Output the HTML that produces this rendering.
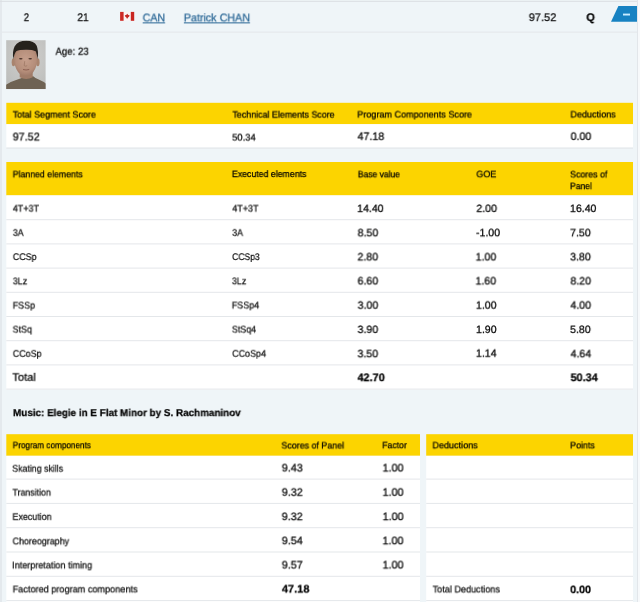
<!DOCTYPE html>
<html><head><meta charset="utf-8">
<style>
html,body{margin:0;padding:0;}
body{width:640px;height:602px;overflow:hidden;background:#eff5f8;position:relative;font-family:"Liberation Sans",sans-serif;}
.t{position:absolute;left:0;top:0;white-space:nowrap;line-height:12px;transform-origin:0 0;text-rendering:geometricPrecision;-webkit-text-stroke:0.25px currentColor;will-change:transform;}
svg{position:absolute;left:0;top:0;}
</style></head><body>
<svg width="640" height="602" viewBox="0 0 640 602" shape-rendering="geometricPrecision">
<defs>
<radialGradient id="pbg" cx="0.55" cy="0.35" r="0.75"><stop offset="0" stop-color="#d0d0ce"/><stop offset="1" stop-color="#bcbdbb"/></radialGradient>
<radialGradient id="skin" cx="0.5" cy="0.4" r="0.65"><stop offset="0" stop-color="#c69f8c"/><stop offset="0.65" stop-color="#b58e7a"/><stop offset="1" stop-color="#977363"/></radialGradient><clipPath id="pclip"><rect width="39.4" height="48.9"/></clipPath><filter id="pblur" x="-10%" y="-10%" width="120%" height="120%"><feGaussianBlur stdDeviation="0.45"/></filter>
</defs>
<rect x="0" y="0" width="640" height="602" fill="#eff5f8"/>
<rect x="0" y="0" width="2" height="602" fill="#e4e9ed"/>
<rect x="0" y="0.8" width="637.5" height="1" fill="#dadee2"/>
<rect x="637" y="0" width="1" height="602" fill="#e2e6ea"/>
<rect x="638" y="0" width="2" height="602" fill="#f7f9fb"/>
<rect x="2" y="31.6" width="635" height="1" fill="#e3e7ea"/>
<!-- blue tab -->
<path d="M618.4 6 L637 6 L637 21.8 L611 21.8 Z" fill="#1782c2"/>
<rect x="623" y="13.6" width="7" height="1.9" fill="#c9ecff"/>
<!-- flag -->
<rect x="120.1" y="11.9" width="14.1" height="8.9" fill="#fbf3f3"/>
<rect x="120.1" y="11.9" width="3.5" height="8.9" fill="#cc2a25"/>
<rect x="130.8" y="11.9" width="3.4" height="8.9" fill="#c92520"/>
<path d="M127.2 13.8 L128.2 15 L129.6 15.3 L129.2 16.6 L128 17.6 L127.6 18.6 L126.8 18.6 L126.4 17.6 L125.2 16.6 L124.8 15.3 L126.2 15 Z" fill="#c42823"/>
<!-- photo -->
<g transform="translate(6.2,40.2)">
<rect width="39.4" height="48.9" fill="url(#pbg)"/>
<g clip-path="url(#pclip)"><g filter="url(#pblur)">
<path d="M-1 50 L-1 45 Q5 41 12 39 Q16 38 18 36 L27 36 Q29 38 32 39 Q37 41 40.5 44 L40.5 50 Z" fill="#6e6252"/>
<path d="M13.5 28 L26.5 28 L26.5 37 Q20 40.5 13.5 37 Z" fill="#a07c68"/>
<ellipse cx="7.3" cy="22" rx="1.8" ry="4" fill="#a9846e"/>
<ellipse cx="31.6" cy="22" rx="1.8" ry="4" fill="#a9846e"/>
<path d="M7.8 17 Q7.5 12 10 9 L29 9 Q31.5 12 31.2 17 Q31 27 27 32 Q23.5 36 19.5 36 Q15.5 36 12 32 Q8 27 7.8 17 Z" fill="url(#skin)"/>
<path d="M7 19 Q6 11 8.5 6 Q12 0.6 20 0.6 Q28 0.6 30.5 5.5 Q32.5 10.5 31.4 19 Q30.5 13 29.5 11 Q26 9.4 19.5 9.6 Q13 9.6 10 11 Q8.3 13 7 19 Z" fill="#25201d"/>
<ellipse cx="14.6" cy="18.6" rx="1.8" ry="0.8" fill="#4a342c"/>
<ellipse cx="24" cy="18.6" rx="1.8" ry="0.8" fill="#4a342c"/>
<path d="M18.5 21 L18 25.5 Q19.5 26.5 21 25.5" stroke="#9a7460" stroke-width="0.7" fill="none"/>
<path d="M16.8 29.3 Q19.8 30.3 23 29.3" stroke="#8c5f52" stroke-width="1" fill="none"/>
</g></g>
</g>
<!-- table 1 -->
<rect x="6.3" y="102.8" width="626.7" height="21.4" fill="#fcd400"/>
<rect x="6.3" y="124.2" width="626.7" height="23.4" fill="#ffffff"/>
<rect x="6.3" y="147.6" width="626.7" height="1" fill="#e2e5e8"/>
<!-- table 2 -->
<rect x="6.3" y="162" width="626.7" height="33.4" fill="#fcd400"/>
<rect x="6.3" y="195.4" width="626.7" height="194.2" fill="#ffffff"/>
<g fill="#e4e7ea">
<rect x="6.3" y="219.2" width="626.7" height="1"/>
<rect x="6.3" y="243.4" width="626.7" height="1"/>
<rect x="6.3" y="267.6" width="626.7" height="1"/>
<rect x="6.3" y="291.8" width="626.7" height="1"/>
<rect x="6.3" y="316.0" width="626.7" height="1"/>
<rect x="6.3" y="340.2" width="626.7" height="1"/>
<rect x="6.3" y="364.4" width="626.7" height="1"/>
<rect x="6.3" y="388.6" width="626.7" height="1"/>
</g>
<!-- table 3 -->
<rect x="6.3" y="434.2" width="413.7" height="21.6" fill="#fcd400"/>
<rect x="426.2" y="434.2" width="206.8" height="21.6" fill="#fcd400"/>
<rect x="6.3" y="455.8" width="413.7" height="146.2" fill="#ffffff"/>
<rect x="426.2" y="455.8" width="206.8" height="146.2" fill="#ffffff"/>
<g fill="#e4e7ea">
<rect x="6.3" y="478.6" width="413.7" height="1"/><rect x="426.2" y="478.6" width="206.8" height="1"/>
<rect x="6.3" y="502.9" width="413.7" height="1"/><rect x="426.2" y="502.9" width="206.8" height="1"/>
<rect x="6.3" y="527.2" width="413.7" height="1"/><rect x="426.2" y="527.2" width="206.8" height="1"/>
<rect x="6.3" y="551.5" width="413.7" height="1"/><rect x="426.2" y="551.5" width="206.8" height="1"/>
<rect x="6.3" y="575.8" width="413.7" height="1"/><rect x="426.2" y="575.8" width="206.8" height="1"/>
<rect x="6.3" y="600.1" width="413.7" height="1"/><rect x="426.2" y="600.1" width="206.8" height="1"/>
</g>
</svg>

<div class="t" id="t0" style="font-size:11px;color:#0a0a0a;transform:translate(23.74px,11.95px) scale(0.8793,0.9995);">2</div>
<div class="t" id="t1" style="font-size:11px;color:#0a0a0a;transform:translate(77.38px,11.95px) scale(0.9285,0.9995);">21</div>
<div class="t" id="t2" style="font-size:11px;color:#2a6796;transform:translate(142.66px,12.33px) scale(0.9649,0.9995);text-decoration:underline;">CAN</div>
<div class="t" id="t3" style="font-size:11px;color:#2a6796;transform:translate(183.82px,12.33px) scale(0.9752,0.9995);text-decoration:underline;">Patrick CHAN</div>
<div class="t" id="t4" style="font-size:11px;color:#0a0a0a;transform:translate(528.75px,11.95px) scale(0.9997,0.9995);">97.52</div>
<div class="t" id="t5" style="font-size:11px;color:#000;transform:translate(586.28px,11.95px) scale(1.0029,0.9995);font-weight:bold;">Q</div>
<div class="t" id="t6" style="font-size:10.3px;color:#0a0a0a;transform:translate(55.51px,46.71px) scale(0.9349,0.9995);">Age: 23</div>
<div class="t" id="t7" style="font-size:9.2px;color:#000;transform:translate(12.73px,108.55px) scale(0.9742,0.9995);">Total Segment Score</div>
<div class="t" id="t8" style="font-size:9.2px;color:#000;transform:translate(232.46px,108.59px) scale(0.9662,0.9995);">Technical Elements Score</div>
<div class="t" id="t9" style="font-size:9.2px;color:#000;transform:translate(357.23px,108.50px) scale(0.9855,0.9995);">Program Components Score</div>
<div class="t" id="t10" style="font-size:9.2px;color:#000;transform:translate(570.43px,108.43px) scale(0.9860,0.9995);">Deductions</div>
<div class="t" id="t11" style="font-size:11px;color:#000;transform:translate(12.67px,131.40px) scale(0.9818,0.9995);">97.52</div>
<div class="t" id="t12" style="font-size:9.6px;color:#000;transform:translate(232.20px,132.54px) scale(0.9753,0.9995);">50.34</div>
<div class="t" id="t13" style="font-size:10.8px;color:#000;transform:translate(357.52px,130.83px) scale(0.9905,0.9995);">47.18</div>
<div class="t" id="t14" style="font-size:10.8px;color:#000;transform:translate(570.60px,130.82px) scale(0.9848,0.9995);">0.00</div>
<div class="t" id="t15" style="font-size:9.2px;color:#000;transform:translate(12.71px,168.30px) scale(0.9505,0.9995);">Planned elements</div>
<div class="t" id="t16" style="font-size:9.2px;color:#000;transform:translate(231.91px,167.99px) scale(0.9538,0.9995);">Executed elements</div>
<div class="t" id="t17" style="font-size:9.2px;color:#000;transform:translate(357.90px,168.29px) scale(0.9250,0.9995);">Base value</div>
<div class="t" id="t18" style="font-size:9.2px;color:#000;transform:translate(476.30px,168.24px) scale(0.9812,0.9995);">GOE</div>
<div class="t" id="t19" style="font-size:9.2px;color:#000;transform:translate(570.04px,168.40px) scale(0.9601,0.9995);">Scores of</div>
<div class="t" id="t20" style="font-size:9.2px;color:#000;transform:translate(570.01px,180.09px) scale(0.9312,0.9995);">Panel</div>
<div class="t" id="t21" style="font-size:9.6px;color:#111;transform:translate(12.83px,203.51px) scale(0.9350,0.9995);">4T+3T</div>
<div class="t" id="t22" style="font-size:9.6px;color:#111;transform:translate(232.38px,203.51px) scale(0.9300,0.9995);">4T+3T</div>
<div class="t" id="t23" style="font-size:10.6px;color:#000;transform:translate(357.14px,202.94px) scale(1.0000,0.9995);">14.40</div>
<div class="t" id="t24" style="font-size:10.6px;color:#000;transform:translate(476.34px,202.94px) scale(1.0000,0.9995);">2.00</div>
<div class="t" id="t25" style="font-size:10.6px;color:#000;transform:translate(569.90px,202.94px) scale(1.0000,0.9995);">16.40</div>
<div class="t" id="t26" style="font-size:9.6px;color:#111;transform:translate(12.81px,227.76px) scale(0.9300,0.9995);">3A</div>
<div class="t" id="t27" style="font-size:9.6px;color:#111;transform:translate(232.17px,227.77px) scale(0.9300,0.9995);">3A</div>
<div class="t" id="t28" style="font-size:10.6px;color:#000;transform:translate(357.58px,227.27px) scale(1.0000,0.9995);">8.50</div>
<div class="t" id="t29" style="font-size:10.6px;color:#000;transform:translate(475.97px,227.25px) scale(1.0000,0.9995);">-1.00</div>
<div class="t" id="t30" style="font-size:10.6px;color:#000;transform:translate(570.10px,227.28px) scale(1.0000,0.9995);">7.50</div>
<div class="t" id="t31" style="font-size:9.6px;color:#111;transform:translate(12.82px,251.95px) scale(0.9300,0.9995);">CCSp</div>
<div class="t" id="t32" style="font-size:9.6px;color:#111;transform:translate(232.19px,251.96px) scale(0.8912,0.9995);">CCSp3</div>
<div class="t" id="t33" style="font-size:10.6px;color:#000;transform:translate(357.49px,251.37px) scale(1.0000,0.9995);">2.80</div>
<div class="t" id="t34" style="font-size:10.6px;color:#000;transform:translate(475.58px,251.40px) scale(1.0000,0.9995);">1.00</div>
<div class="t" id="t35" style="font-size:10.6px;color:#000;transform:translate(570.15px,251.35px) scale(1.0000,0.9995);">3.80</div>
<div class="t" id="t36" style="font-size:9.6px;color:#111;transform:translate(12.80px,276.28px) scale(0.9300,0.9995);">3Lz</div>
<div class="t" id="t37" style="font-size:9.6px;color:#111;transform:translate(231.89px,276.23px) scale(0.9300,0.9995);">3Lz</div>
<div class="t" id="t38" style="font-size:10.6px;color:#000;transform:translate(357.56px,275.43px) scale(1.0000,0.9995);">6.60</div>
<div class="t" id="t39" style="font-size:10.6px;color:#000;transform:translate(475.45px,275.43px) scale(1.0000,0.9995);">1.60</div>
<div class="t" id="t40" style="font-size:10.6px;color:#000;transform:translate(570.40px,275.44px) scale(1.0000,0.9995);">8.20</div>
<div class="t" id="t41" style="font-size:9.6px;color:#111;transform:translate(12.74px,300.52px) scale(0.9300,0.9995);">FSSp</div>
<div class="t" id="t42" style="font-size:9.6px;color:#111;transform:translate(231.82px,300.38px) scale(0.9300,0.9995);">FSSp4</div>
<div class="t" id="t43" style="font-size:10.6px;color:#000;transform:translate(357.57px,299.69px) scale(1.0000,0.9995);">3.00</div>
<div class="t" id="t44" style="font-size:10.6px;color:#000;transform:translate(475.92px,299.69px) scale(1.0000,0.9995);">1.00</div>
<div class="t" id="t45" style="font-size:10.6px;color:#000;transform:translate(570.39px,299.68px) scale(1.0000,0.9995);">4.00</div>
<div class="t" id="t46" style="font-size:9.6px;color:#111;transform:translate(12.60px,324.54px) scale(0.9300,0.9995);">StSq</div>
<div class="t" id="t47" style="font-size:9.6px;color:#111;transform:translate(231.85px,324.52px) scale(0.9300,0.9995);">StSq4</div>
<div class="t" id="t48" style="font-size:10.6px;color:#000;transform:translate(357.56px,323.94px) scale(1.0000,0.9995);">3.90</div>
<div class="t" id="t49" style="font-size:10.6px;color:#000;transform:translate(475.94px,323.94px) scale(1.0000,0.9995);">1.90</div>
<div class="t" id="t50" style="font-size:10.6px;color:#000;transform:translate(570.10px,323.94px) scale(1.0000,0.9995);">5.80</div>
<div class="t" id="t51" style="font-size:9.6px;color:#111;transform:translate(12.80px,348.76px) scale(0.9300,0.9995);">CCoSp</div>
<div class="t" id="t52" style="font-size:9.6px;color:#111;transform:translate(232.21px,348.75px) scale(0.9300,0.9995);">CCoSp4</div>
<div class="t" id="t53" style="font-size:10.6px;color:#000;transform:translate(357.50px,348.25px) scale(1.0000,0.9995);">3.50</div>
<div class="t" id="t54" style="font-size:10.6px;color:#000;transform:translate(475.90px,347.73px) scale(1.0000,0.9995);">1.14</div>
<div class="t" id="t55" style="font-size:10.6px;color:#000;transform:translate(570.51px,348.26px) scale(1.0000,0.9995);">4.64</div>
<div class="t" id="t56" style="font-size:11px;color:#000;transform:translate(12.39px,371.77px) scale(1.0093,0.9995);">Total</div>
<div class="t" id="t57" style="font-size:11px;color:#000;transform:translate(357.50px,372.08px) scale(0.9886,0.9995);font-weight:bold;">42.70</div>
<div class="t" id="t58" style="font-size:11px;color:#000;transform:translate(570.62px,372.09px) scale(0.9828,0.9995);font-weight:bold;">50.34</div>
<div class="t" id="t59" style="font-size:10px;color:#000;transform:translate(13.03px,408.05px) scale(0.9875,0.9995);font-weight:bold;">Music: Elegie in E Flat Minor by S. Rachmaninov</div>
<div class="t" id="t60" style="font-size:9.2px;color:#000;transform:translate(12.72px,439.22px) scale(0.8900,0.9995);">Program components</div>
<div class="t" id="t61" style="font-size:9.2px;color:#000;transform:translate(281.36px,439.45px) scale(0.9676,0.9995);">Scores of Panel</div>
<div class="t" id="t62" style="font-size:9.2px;color:#000;transform:translate(382.25px,439.23px) scale(0.9462,0.9995);">Factor</div>
<div class="t" id="t63" style="font-size:9.2px;color:#000;transform:translate(432.45px,439.30px) scale(0.9847,0.9995);">Deductions</div>
<div class="t" id="t64" style="font-size:9.2px;color:#000;transform:translate(570.12px,439.35px) scale(0.9621,0.9995);">Points</div>
<div class="t" id="t65" style="font-size:9.6px;color:#111;transform:translate(12.20px,463.64px) scale(0.9175,0.9995);">Skating skills</div>
<div class="t" id="t66" style="font-size:10.8px;color:#000;transform:translate(281.70px,462.40px) scale(1.0000,0.9995);">9.43</div>
<div class="t" id="t67" style="font-size:10.8px;color:#000;transform:translate(382.55px,462.41px) scale(1.0000,0.9995);">1.00</div>
<div class="t" id="t68" style="font-size:9.6px;color:#111;transform:translate(12.48px,487.51px) scale(0.9191,0.9995);">Transition</div>
<div class="t" id="t69" style="font-size:10.8px;color:#000;transform:translate(281.69px,486.75px) scale(1.0000,0.9995);">9.32</div>
<div class="t" id="t70" style="font-size:10.8px;color:#000;transform:translate(382.55px,486.74px) scale(1.0000,0.9995);">1.00</div>
<div class="t" id="t71" style="font-size:9.6px;color:#111;transform:translate(12.42px,511.84px) scale(0.9300,0.9995);">Execution</div>
<div class="t" id="t72" style="font-size:10.8px;color:#000;transform:translate(281.68px,511.09px) scale(1.0000,0.9995);">9.32</div>
<div class="t" id="t73" style="font-size:10.8px;color:#000;transform:translate(382.57px,511.09px) scale(1.0000,0.9995);">1.00</div>
<div class="t" id="t74" style="font-size:9.6px;color:#111;transform:translate(12.54px,536.32px) scale(0.9300,0.9995);">Choreography</div>
<div class="t" id="t75" style="font-size:10.8px;color:#000;transform:translate(281.70px,535.24px) scale(1.0000,0.9995);">9.54</div>
<div class="t" id="t76" style="font-size:10.8px;color:#000;transform:translate(382.46px,535.21px) scale(1.0000,0.9995);">1.00</div>
<div class="t" id="t77" style="font-size:9.6px;color:#111;transform:translate(12.13px,560.32px) scale(0.9433,0.9995);">Interpretation timing</div>
<div class="t" id="t78" style="font-size:10.8px;color:#000;transform:translate(281.69px,559.46px) scale(1.0000,0.9995);">9.57</div>
<div class="t" id="t79" style="font-size:10.8px;color:#000;transform:translate(382.55px,559.41px) scale(1.0000,0.9995);">1.00</div>
<div class="t" id="t80" style="font-size:9.6px;color:#111;transform:translate(12.68px,584.36px) scale(0.9520,0.9995);">Factored program components</div>
<div class="t" id="t81" style="font-size:10.8px;color:#000;transform:translate(281.86px,583.50px) scale(1.0170,0.9995);font-weight:bold;">47.18</div>
<div class="t" id="t82" style="font-size:9.6px;color:#111;transform:translate(432.63px,584.40px) scale(0.9490,0.9995);">Total Deductions</div>
<div class="t" id="t83" style="font-size:10.8px;color:#000;transform:translate(570.21px,584.12px) scale(0.9897,0.9995);font-weight:bold;">0.00</div>
</body></html>
